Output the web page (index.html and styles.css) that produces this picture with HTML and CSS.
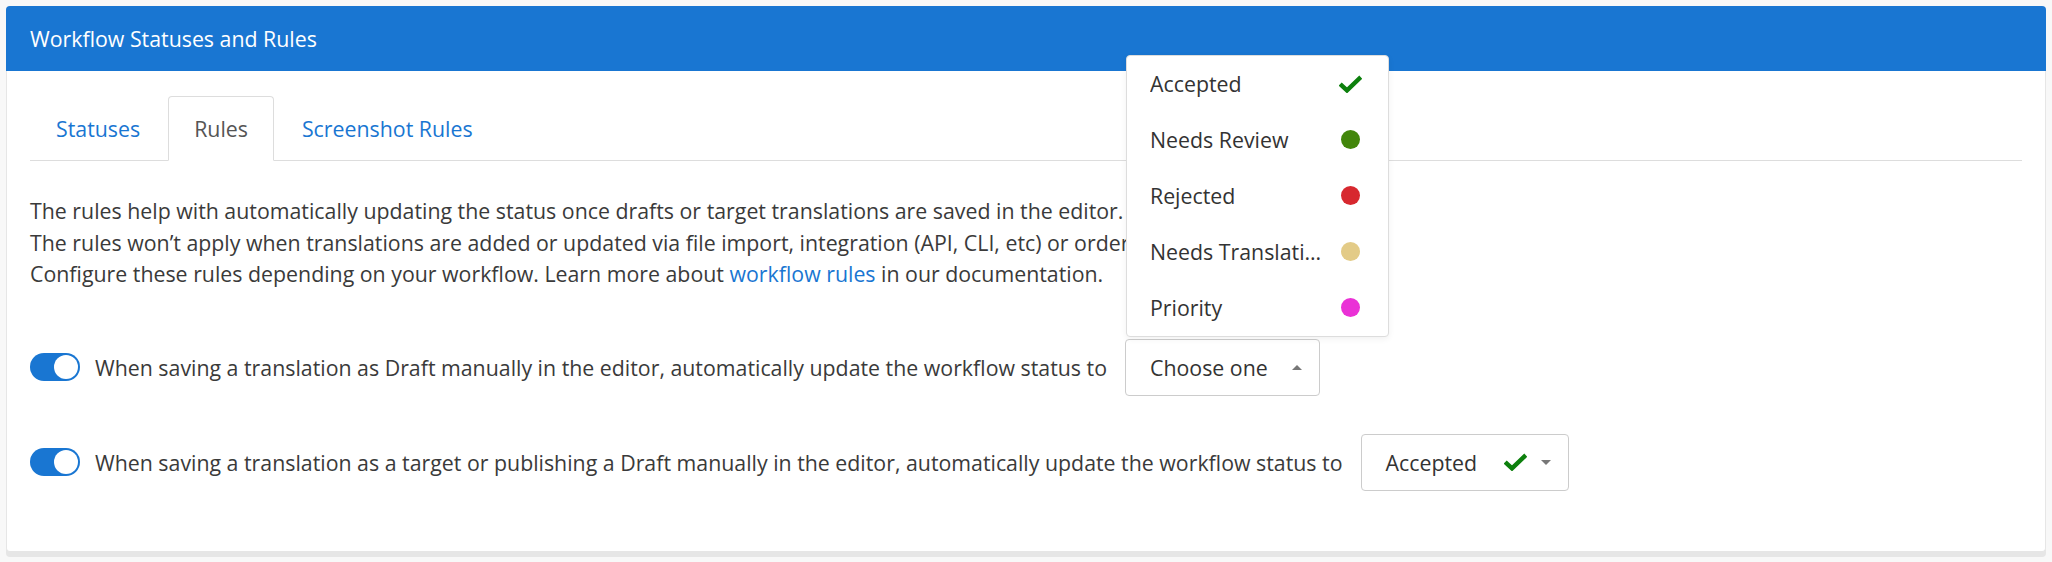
FILE: index.html
```html
<!DOCTYPE html>
<html lang="en">
<head>
    <meta charset="UTF-8">
    <meta name="viewport" content="width=device-width, initial-scale=1.0">
    <title>Workflow Statuses and Rules</title>
    <link rel="stylesheet" href="styles.css">
</head>
<body>
    <div class="card">
        <!-- header -->
        <div class="card-header">Workflow Statuses and Rules</div>

        <div class="card-body">
            <!-- tabs -->
            <ul class="nav-tabs">
                <li><a href="#">Statuses</a></li>
                <li class="active"><a href="#">Rules</a></li>
                <li><a href="#">Screenshot Rules</a></li>
            </ul>

            <p class="description">
                The rules help with automatically updating the status once drafts or target translations are saved in the editor.<br>
                The rules won’t apply when translations are added or updated via file import, integration (API, CLI, etc) or orders.<br>
                Configure these rules depending on your workflow. Learn more about <a href="#">workflow rules</a> in our documentation.
            </p>

            <div class="rules">
                <div class="rule-row">
                    <span class="switch on"><span class="knob"></span></span>
                    <span class="rule-label">When saving a translation as Draft manually in the editor, automatically update the workflow status to</span>
                    <div class="select-wrap">
                        <div class="select open">
                            <span class="select-text">Choose one</span>
                            <span class="caret up"></span>
                        </div>

                        <!-- dropup menu -->
                        <ul class="dropdown-menu">
                            <li><span class="item-text">Accepted</span><span class="item-icon">
                                <svg width="23" height="18" viewBox="0 0 23 18"><path d="M1.2 9 L8 15.4 L21.8 2.2" fill="none" stroke="#0d800d" stroke-width="4.4"/></svg>
                            </span></li>
                            <li><span class="item-text">Needs Review</span><span class="item-icon"><span class="dot review"></span></span></li>
                            <li><span class="item-text">Rejected</span><span class="item-icon"><span class="dot rejected"></span></span></li>
                            <li><span class="item-text">Needs Translation</span><span class="item-icon"><span class="dot translation"></span></span></li>
                            <li><span class="item-text">Priority</span><span class="item-icon"><span class="dot priority"></span></span></li>
                        </ul>
                    </div>
                </div>

                <div class="rule-row">
                    <span class="switch on"><span class="knob"></span></span>
                    <span class="rule-label">When saving a translation as a target or publishing a Draft manually in the editor, automatically update the workflow status to</span>
                    <div class="select-wrap">
                        <div class="select">
                            <span class="select-text">Accepted</span>
                            <svg class="select-check" width="23" height="18" viewBox="0 0 23 18"><path d="M1.2 9 L8 15.4 L21.8 2.2" fill="none" stroke="#0d800d" stroke-width="4.4"/></svg>
                            <span class="caret"></span>
                        </div>
                    </div>
                </div>
            </div>
        </div>
    </div>
</body>
</html>
```

FILE: styles.css
```css
body {
    margin: 0;
    padding: 6px 6px 7px 6px;
    font-family: "Open Sans", Arial, sans-serif;
    font-size: 21.33px;
    color: #333;
    background-color: #f8f8f8;
}

/* 卡片 */
.card {
    background-color: #fff;
    border: 1px solid #e6e6e6;
    border-top: none;
    border-radius: 4px;
    box-shadow: 0 5px 0 #e6e6e6;
}

.card-header {
    height: 65px;
    padding: 0 24px;
    margin: 0 -1px;
    display: flex;
    align-items: center;
    background-color: #1976d2;
    color: #fff;
    border-radius: 4px 4px 0 0;
}

.card-body {
    padding: 25px 23px 60px 23px;
}

/* 分頁 */
.nav-tabs {
    list-style: none;
    margin: 0;
    padding: 0;
    display: flex;
    border-bottom: 1px solid #ddd;
}

.nav-tabs li {
    margin-right: 2px;
    margin-bottom: -1px;
}

.nav-tabs a {
    display: block;
    padding: 16px 25px;
    line-height: 31px;
    color: #1976d2;
    text-decoration: none;
    border: 1px solid transparent;
    border-radius: 4px 4px 0 0;
}

.nav-tabs .active a {
    color: #555;
    border-color: #ddd;
    border-bottom-color: #fff;
    background-color: #fff;
}

.description {
    margin: 34px 0 0 0;
    line-height: 31.5px;
    color: #3a3a3a;
}

.description a {
    color: #1976d2;
    text-decoration: none;
}

/* 規則列 */
.rules {
    margin-top: 49px;
    display: flex;
    flex-direction: column;
    gap: 38px;
}

.rule-row {
    display: flex;
    align-items: center;
}

.switch {
    width: 50px;
    height: 28px;
    border-radius: 14px;
    background-color: #1976d2;
    display: flex;
    align-items: center;
    justify-content: flex-end;
    padding: 0 2px;
    box-sizing: border-box;
    flex-shrink: 0;
}

.knob {
    width: 24px;
    height: 24px;
    border-radius: 50%;
    background-color: #fff;
}

.rule-label {
    margin-left: 15px;
    color: #3a3a3a;
    white-space: nowrap;
}

.select-wrap {
    position: relative;
    margin-left: 18px;
}

.select {
    height: 57px;
    box-sizing: border-box;
    border: 1px solid #ccc;
    border-radius: 4px;
    padding: 0 17px 0 24px;
    display: flex;
    align-items: center;
    color: #333;
    background-color: #fff;
}

.select-check {
    margin-left: 27px;
}

.caret {
    width: 0;
    height: 0;
    margin-left: 14px;
    border-left: 5px solid transparent;
    border-right: 5px solid transparent;
    border-top: 5px solid #777;
}

.caret.up {
    margin-left: 24px;
    border-top: none;
    border-bottom: 5px solid #777;
}

/* 下拉選單 (往上開) */
.dropdown-menu {
    position: absolute;
    left: 1px;
    bottom: calc(100% + 2px);
    width: 263px;
    box-sizing: border-box;
    margin: 0;
    padding: 0;
    list-style: none;
    background-color: #fff;
    border: 1px solid #ddd;
    border-radius: 4px;
    box-shadow: 0 2px 6px rgba(0, 0, 0, 0.06);
    z-index: 10;
}

.dropdown-menu li {
    height: 56px;
    display: flex;
    align-items: center;
    padding: 0 26px 0 23px;
    gap: 15px;
    color: #333;
}

.item-text {
    flex: 1;
    min-width: 0;
    white-space: nowrap;
    overflow: hidden;
    text-overflow: ellipsis;
}

.item-icon {
    width: 23px;
    display: flex;
    justify-content: center;
    align-items: center;
}

.dot {
    width: 19px;
    height: 19px;
    border-radius: 50%;
}

.dot.review { background-color: #42860b; }
.dot.rejected { background-color: #d7282f; }
.dot.translation { background-color: #e3cb87; }
.dot.priority { background-color: #ea31d6; }
```
